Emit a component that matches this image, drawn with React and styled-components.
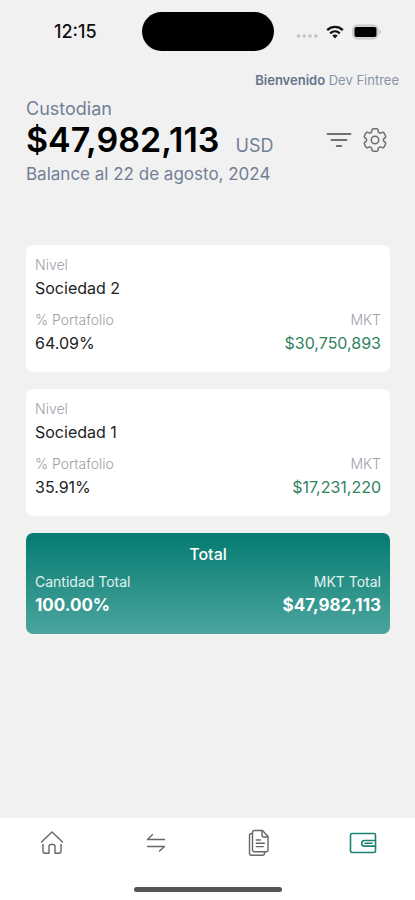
import styled, { createGlobalStyle } from "styled-components";
import { HiOutlineCog6Tooth } from "react-icons/hi2";

const GlobalStyle = createGlobalStyle`
  * {
    box-sizing: border-box;
  }
  body {
    margin: 0;
    background-color: #f1f1f1;
    font-family: Inter, "Liberation Sans", sans-serif;
  }
  h1, h2, p, dl, dt, dd {
    margin: 0;
    font-weight: 400;
  }
`;

const Container = styled.div`
  display: flex;
  flex-direction: column;
  min-height: 100vh;
`;

const StatusBar = styled.header`
  display: grid;
  grid-template-columns: 1fr auto 1fr;
  align-items: center;
  padding: 12px 24px 0;
`;

const Time = styled.time`
  padding-left: 30px;
  color: #111;
  font-size: 18px;
  font-weight: 500;
`;

const Island = styled.div`
  width: 132px;
  height: 39px;
  border-radius: 20px;
  background-color: #000;
`;

const StatusIcons = styled.div`
  display: flex;
  align-items: center;
  justify-content: flex-end;
  gap: 8px;
  padding-right: 9px;
`;

const Main = styled.main`
  display: flex;
  flex: 1;
  flex-direction: column;
  padding-top: 20px;
`;

const Welcome = styled.p`
  padding: 0 16px;
  color: #8a93a6;
  font-size: 13px;
  line-height: 18px;
  text-align: right;

  strong {
    color: #64748b;
    font-weight: 600;
  }
`;

const Summary = styled.section`
  padding: 8px 25px 0 26px;
  color: #718096;
  font-size: 18px;
  line-height: 24px;
`;

const BalanceRow = styled.div`
  display: flex;
  align-items: center;
  justify-content: space-between;
`;

const Balance = styled.div`
  display: flex;
  align-items: baseline;
  gap: 16px;
`;

const Amount = styled.h1`
  color: #000;
  font-size: 34px;
  font-weight: 600;
  line-height: 38px;
`;

const BalanceDate = styled.p`
  padding-top: 3px;
  font-size: 17px;
`;

const Actions = styled.div`
  display: flex;
  gap: 8px;
`;

const IconButton = styled.button`
  display: flex;
  align-items: center;
  padding: 0;
  border: 0;
  background: none;
  color: #6f6f6f;
  cursor: pointer;
`;

const List = styled.section`
  display: flex;
  flex-direction: column;
  gap: 17px;
  padding: 59px 25px 24px 26px;
`;

const Card = styled.article`
  padding: 8px 9px 17px;
  border-radius: 7px;
  background-color: #fff;
`;

const TotalCard = styled(Card)`
  background: linear-gradient(#047b70, #4ca59e);
  color: #fff;
`;

const TotalTitle = styled.h2`
  margin-bottom: 3px;
  font-size: 16px;
  font-weight: 500;
  line-height: 26px;
  text-align: center;
`;

const Fields = styled.dl`
  display: flex;
  justify-content: space-between;

  & + & {
    margin-top: 8px;
  }
`;

const Field = styled.div`
  text-align: ${({ $end }) => ($end ? "right" : "left")};
`;

const Label = styled.dt`
  color: ${({ $light }) => ($light ? "#e3f2f0" : "#9b9fa8")};
  font-size: 14px;
  font-weight: ${({ $light }) => ($light ? 400 : 300)};
  line-height: 23px;
`;

const Value = styled.dd`
  color: ${({ $color }) => $color || "#222"};
  font-size: 16px;
  line-height: 24px;
`;

const TotalValue = styled(Value)`
  color: #fff;
  font-size: 17px;
  font-weight: 700;
`;

const BottomBar = styled.footer`
  display: flex;
  flex-direction: column;
  align-items: center;
  gap: 30px;
  padding: 11px 0 8px;
  background-color: #fff;
`;

const Nav = styled.nav`
  display: grid;
  grid-template-columns: repeat(4, 1fr);
  width: 100%;
`;

const NavLink = styled.a`
  display: flex;
  align-items: center;
  justify-content: center;
  height: 28px;
  color: ${({ $active }) => ($active ? "#1c8273" : "#666")};
`;

const HomeIndicator = styled.div`
  width: 148px;
  height: 5px;
  border-radius: 3px;
  background-color: #555;
`;

const societies = [
  { name: "Sociedad 2", share: "64.09%", mkt: "$30,750,893" },
  { name: "Sociedad 1", share: "35.91%", mkt: "$17,231,220" },
];

const Stroke = ({ width, height, weight = 1.4, children }) => (
  <svg
    width={width}
    height={height}
    viewBox={`0 0 ${width} ${height}`}
    fill="none"
    stroke="currentColor"
    strokeWidth={weight}
    strokeLinecap="round"
    strokeLinejoin="round"
    aria-hidden="true"
  >
    {children}
  </svg>
);

const SignalIcon = () => (
  <svg width="22" height="16" fill="#c4c4c4" aria-hidden="true">
    <circle cx="2.5" cy="12" r="1.8" />
    <circle cx="8.2" cy="12" r="1.8" />
    <circle cx="14" cy="12" r="1.8" />
    <circle cx="19.8" cy="12" r="1.8" />
  </svg>
);

const WifiIcon = () => (
  <svg width="18" height="14" viewBox="0 0 18 14" aria-hidden="true">
    <g fill="none" stroke="#111" strokeWidth="2.3">
      <path d="M1.2 5.1C5.7.9 12.3.9 16.8 5.1" />
      <path d="M4.2 8.3c2.8-2.5 6.8-2.5 9.6 0" />
    </g>
    <path d="M6.3 10.5c1.6-1.4 3.8-1.4 5.4 0L9 13.4z" fill="#111" />
  </svg>
);

const BatteryIcon = () => (
  <svg width="30" height="16" viewBox="0 0 30 16" aria-hidden="true">
    <rect x=".8" y="1" width="25.4" height="14" rx="4.5" fill="#d2d2d2" stroke="#c6c6c6" />
    <rect x="2.5" y="3" width="22" height="10" rx="2" fill="#000" />
    <path d="M27.6 5.8c2 .8 2 3.4 0 4.2z" fill="#bcbcbc" />
  </svg>
);

const FilterIcon = () => (
  <Stroke width={26} height={26} weight={1.8}>
    <path d="M1.5 7h23M5.5 13h15M10.8 19h4.5" />
  </Stroke>
);

const HomeIcon = () => (
  <Stroke width={24} height={26}>
    <path d="M1.5 12 12 2l10.5 10" />
    <path d="M3 14.5v6.800c0 1.200.8 2 2 2h4v-6.800c0-1.200.7-2 1.800-2h2.400c1.100 0 1.800.8 1.800 2v6.800h4c1.200 0 2-.8 2-2v-6.800" />
  </Stroke>
);

const TransferIcon = () => (
  <Stroke width={20} height={20}>
    <path d="M6.500 1.500l-5 5h17M1.500 13.500h17l-5 4.500" />
  </Stroke>
);

const DocumentsIcon = () => (
  <Stroke width={22} height={28}>
    <path d="M6.500 1.500h8l5.500 6v13.200c0 1.200-.8 2-2 2H6.500c-1.200 0-2-.8-2-2V3.500c0-1.200.8-2 2-2z" />
    <path d="M14 2v4c0 1.200.8 2 2 2h3.500M4.500 4.500h-1c-1.200 0-2 .8-2 2v17.700c0 1.200.8 2 2 2h11c1.200 0 2-.8 2-2v-1.400M8.300 11h4M8.300 14.300h8M8.300 17.600h7" />
  </Stroke>
);

const WalletIcon = () => (
  <Stroke width={28} height={22} weight={1.6}>
    <rect x="1.500" y="1.500" width="25" height="19" rx="1.500" />
    <path d="M26.500 8.500H15.500a2.800 2.800 0 0 0 0 5.600h11M16 11.300h7" />
  </Stroke>
);

const SocietyCard = ({ name, share, mkt }) => (
  <Card>
    <Fields>
      <Field>
        <Label>Nivel</Label>
        <Value>{name}</Value>
      </Field>
    </Fields>
    <Fields>
      <Field>
        <Label>% Portafolio</Label>
        <Value>{share}</Value>
      </Field>
      <Field $end>
        <Label>MKT</Label>
        <Value $color="#318260">{mkt}</Value>
      </Field>
    </Fields>
  </Card>
);

function App() {
  return (
    <Container>
      <GlobalStyle />
      <StatusBar>
        <Time>12:15</Time>
        <Island />
        <StatusIcons>
          <SignalIcon />
          <WifiIcon />
          <BatteryIcon />
        </StatusIcons>
      </StatusBar>
      <Main>
        <Welcome>
          <strong>Bienvenido</strong> Dev Fintree
        </Welcome>
        <Summary>
          <p>Custodian</p>
          <BalanceRow>
            <Balance>
              <Amount>$47,982,113</Amount>
              <span>USD</span>
            </Balance>
            <Actions>
              <IconButton type="button" aria-label="Filtrar">
                <FilterIcon />
              </IconButton>
              <IconButton type="button" aria-label="Ajustes">
                <HiOutlineCog6Tooth size={30} strokeWidth={1.2} />
              </IconButton>
            </Actions>
          </BalanceRow>
          <BalanceDate>Balance al 22 de agosto, 2024</BalanceDate>
        </Summary>
        <List>
          {societies.map((society) => (
            <SocietyCard key={society.name} {...society} />
          ))}
          <TotalCard>
            <TotalTitle>Total</TotalTitle>
            <Fields>
              <Field>
                <Label $light>Cantidad Total</Label>
                <TotalValue>100.00%</TotalValue>
              </Field>
              <Field $end>
                <Label $light>MKT Total</Label>
                <TotalValue>$47,982,113</TotalValue>
              </Field>
            </Fields>
          </TotalCard>
        </List>
      </Main>
      <BottomBar>
        <Nav>
          <NavLink href="#inicio" aria-label="Inicio">
            <HomeIcon />
          </NavLink>
          <NavLink href="#movimientos" aria-label="Movimientos">
            <TransferIcon />
          </NavLink>
          <NavLink href="#documentos" aria-label="Documentos">
            <DocumentsIcon />
          </NavLink>
          <NavLink href="#cartera" aria-label="Cartera" aria-current="page" $active>
            <WalletIcon />
          </NavLink>
        </Nav>
        <HomeIndicator />
      </BottomBar>
    </Container>
  );
}

export default App;
